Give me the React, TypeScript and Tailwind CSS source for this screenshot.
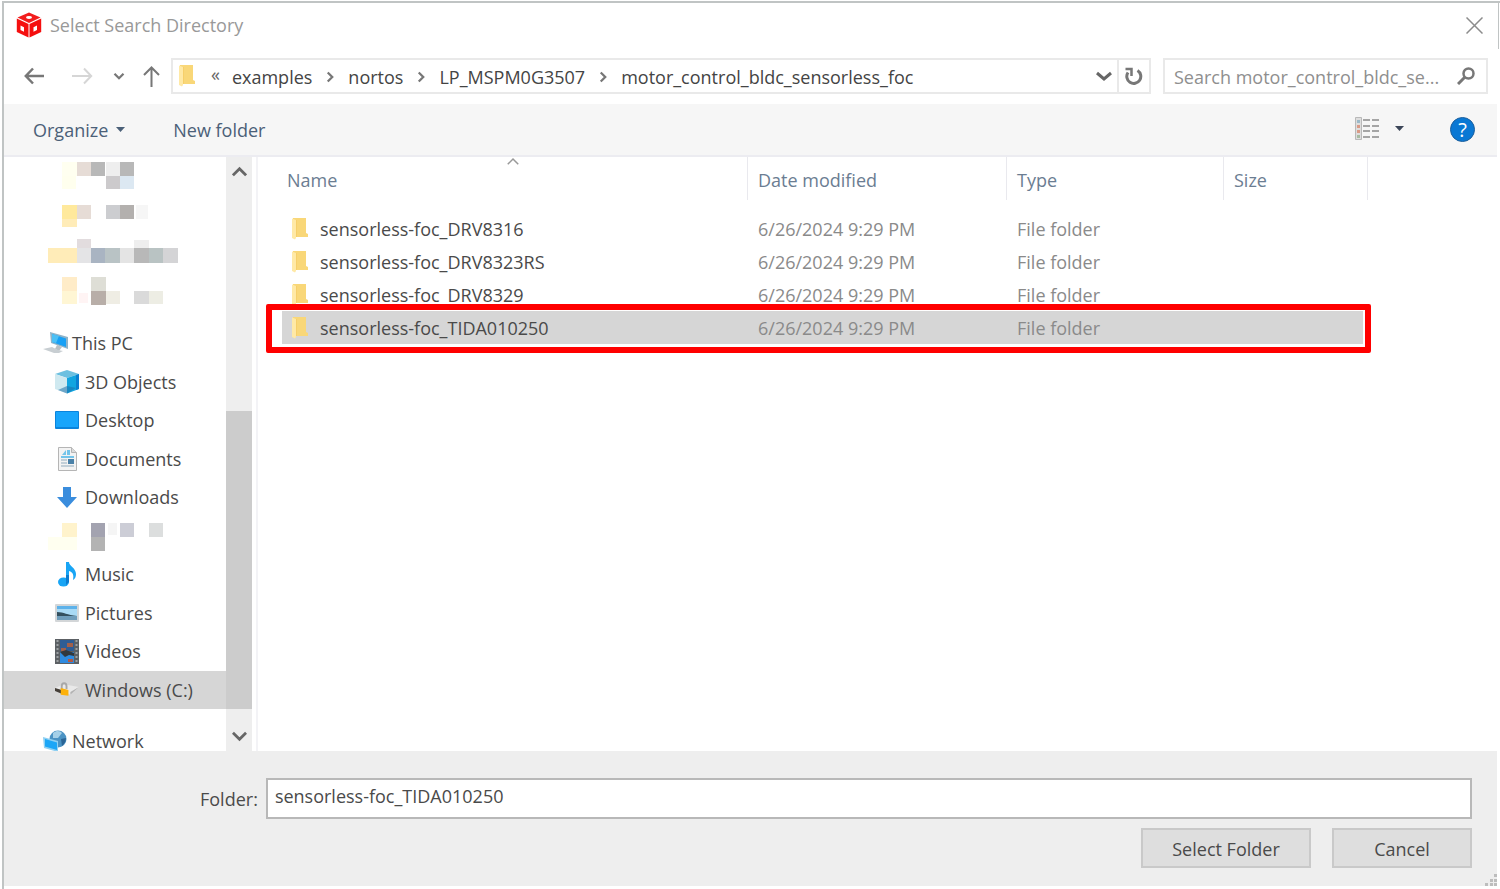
import type { ReactNode } from "react";

const files = [
	{ name: "sensorless-foc_DRV8316", date: "6/26/2024 9:29 PM", type: "File folder" },
	{ name: "sensorless-foc_DRV8323RS", date: "6/26/2024 9:29 PM", type: "File folder" },
	{ name: "sensorless-foc_DRV8329", date: "6/26/2024 9:29 PM", type: "File folder" },
	{ name: "sensorless-foc_TIDA010250", date: "6/26/2024 9:29 PM", type: "File folder", selected: true },
];

const crumbs = ["examples", "nortos", "LP_MSPM0G3507", "motor_control_bldc_sensorless_foc"];

// x, y, width, height, fill
type Block = [number, number, number, number, string];

const pinnedBlocks: Block[] = [
	[62, 5, 15, 14, "#fffff0"],
	[77, 5, 14, 14, "#e6dcd6"],
	[91, 5, 14, 14, "#b8b8b8"],
	[106, 5, 14, 14, "#eeeeee"],
	[120, 5, 14, 14, "#b8b8b8"],
	[62, 19, 14, 13, "#ffffee"],
	[106, 19, 14, 13, "#cccacc"],
	[120, 19, 14, 13, "#dce8f2"],
	[62, 48, 15, 14, "#ffe99c"],
	[77, 48, 14, 14, "#e6dcd6"],
	[106, 48, 14, 14, "#cccdd0"],
	[120, 48, 14, 14, "#b3b0ae"],
	[136, 48, 12, 14, "#f6f6f6"],
	[62, 62, 15, 8, "#ffecb8"],
	[77, 82, 14, 9, "#e2dcde"],
	[134, 83, 15, 8, "#eeeeee"],
	[48, 91, 29, 15, "#ffecb8"],
	[77, 91, 14, 15, "#e4e4e6"],
	[91, 91, 14, 15, "#a9b4c2"],
	[105, 91, 15, 15, "#b9c3c5"],
	[120, 91, 14, 15, "#e4e4e4"],
	[134, 91, 15, 15, "#b8b8b8"],
	[149, 91, 14, 15, "#b9c3c3"],
	[163, 91, 15, 15, "#d4d4d6"],
	[62, 120, 15, 14, "#ffecc8"],
	[91, 120, 15, 14, "#deded6"],
	[62, 134, 15, 13, "#fff6d4"],
	[79, 136, 9, 10, "#fff4f4"],
	[91, 134, 15, 14, "#b8aea8"],
	[106, 134, 14, 13, "#efede4"],
	[134, 134, 15, 13, "#dadada"],
	[149, 134, 14, 13, "#edede4"],
];

const hiddenBlocks: Block[] = [
	[62, 6, 15, 14, "#fff3cc"],
	[91, 6, 14, 14, "#a3a3b0"],
	[108, 6, 9, 12, "#f5f5f5"],
	[120, 6, 14, 14, "#cccdd6"],
	[149, 6, 14, 14, "#dcdede"],
	[48, 20, 29, 13, "#fffff0"],
	[91, 20, 14, 14, "#b3b3b3"],
];

function Mosaic({ blocks, className }: { blocks: Block[]; className: string }) {
	return (
		<svg className={className} aria-hidden="true">
			{blocks.map(([x, y, w, h, fill]) => (
				<rect key={`${x}-${y}`} x={x - 4} y={y} width={w} height={h} fill={fill} />
			))}
		</svg>
	);
}

type ChevronProps = { d: string; className: string; width?: number };

function Chevron({ d, className, width = 3 }: ChevronProps) {
	return (
		<svg className={className} viewBox="0 0 16 16" fill="none" stroke="currentColor" strokeWidth={width} aria-hidden="true">
			<path d={d} />
		</svg>
	);
}

function FolderIcon() {
	return (
		<svg className="shrink-0" width="16" height="23" viewBox="0 0 16 23" aria-hidden="true">
			<path d="M1 1h13v15l2 1v3H1z" fill="#f9d778" />
			<path d="M0 1.500 4 3v18l-1 1.500L0 21z" fill="#ffe9a6" />
			<path d="M4 3h1v17H4z" fill="#f6cf6a" />
		</svg>
	);
}

function CubeLogo() {
	return (
		<svg width="26" height="26" viewBox="0 0 26 26" aria-hidden="true">
			<path d="M13 .5 24.500 5.500 13 11 1.500 5.500z" fill="#f21d1d" />
			<path d="M.8 6.500l11.700 5.500v13.500L.8 20z" fill="#f50f0f" />
			<path d="M25.200 6.500l-11.700 5.500v13.500L25.200 20z" fill="#f50f0f" />
			<ellipse cx="13" cy="5.500" rx="3" ry="1.400" fill="#fff" />
			<path d="M4.500 13.500l3.500 1.700v4.500l-3.500-1.700z" fill="#fff" />
			<path d="M21 13.500l-3.500 1.700v4.500l3.500-1.700z" fill="#fff" />
		</svg>
	);
}

function PcIcon() {
	return (
		<svg width="26" height="24" viewBox="0 0 26 24" aria-hidden="true">
			<path d="M7 1l18 5v12L8 12z" fill="#8fb3c9" />
			<path d="M9 3l14 4.500v8.500L9 11z" fill="#18a0f5" />
			<path d="M9 3l7 2-3 7-4-1z" fill="#4cc0f5" />
			<path d="M14 14l5 2-3 4-4-2z" fill="#b9c0c4" />
			<path d="M0 18l9-2 6 3 5 1-4 2-5 0z" fill="#c8ced2" />
		</svg>
	);
}

function CubeIcon() {
	return (
		<svg width="24" height="24" viewBox="0 0 24 24" aria-hidden="true">
			<path d="M12 0 24 4 12 8 0 4z" fill="#6cc0e0" />
			<path d="M0 4l12 4v15.500L0 19z" fill="#cfe9f0" />
			<path d="M24 4 12 8v15.500L24 19z" fill="#12a5e0" />
			<path d="M21 5l3-1v15l-3 1z" fill="#0a7fd0" />
			<path d="M12 16l9 2-9 5.500L3 20z" fill="#1d6fa8" opacity=".55" />
		</svg>
	);
}

function DesktopIcon() {
	return (
		<svg width="24" height="18" viewBox="0 0 24 18" aria-hidden="true">
			<rect width="24" height="18" rx="1" fill="#0b84dc" />
			<rect x="1" y="1" width="22" height="15" fill="#18a5fb" />
		</svg>
	);
}

function DocumentIcon() {
	return (
		<svg width="19" height="24" viewBox="0 0 19 24" aria-hidden="true">
			<path d="M.5.500h13l5 5v18H.500z" fill="#f3f3f3" stroke="#b5b5b5" />
			<path d="M13.500.500v5h5" fill="#dcdcdc" stroke="#b5b5b5" />
			<path d="M4 8 8 3v5zM9 3h3v5H9zM3 9h13v2H3z" fill="#74c4ea" />
			<path d="M3 13h6M3 16h6M3 19h13" stroke="#b3c4d0" strokeWidth="1.500" />
			<rect x="10" y="12" width="6" height="5" fill="#4a81a8" />
		</svg>
	);
}

function DownloadIcon() {
	return (
		<svg width="20" height="21" viewBox="0 0 20 21" aria-hidden="true">
			<path d="M6 0h8v10h6L10 21 0 10h6z" fill="#3a8ddd" />
		</svg>
	);
}

function MusicIcon() {
	return (
		<svg width="18" height="25" viewBox="0 0 18 25" aria-hidden="true">
			<ellipse cx="5.500" cy="20" rx="5.500" ry="4.500" fill="#18a5f5" />
			<path d="M8 0h3c0 4 7 6 7 12 0 3-1 5-3 6 1-5 0-8-4-9v11H8z" fill="#18a5f5" />
			<path d="M8 13h3v7l-3 3z" fill="#0b7cd0" />
		</svg>
	);
}

function PictureIcon() {
	return (
		<svg width="24" height="18" viewBox="0 0 24 18" aria-hidden="true">
			<rect width="24" height="18" rx="1" fill="#d3d6d8" />
			<rect x="2" y="2" width="20" height="14" fill="#a9daf5" />
			<path d="M2 2h20v3H2z" fill="#5db2ea" />
			<path d="M2 8c7 0 10 3 20 4H2z" fill="#33505f" />
			<path d="M2 12h20v4H2z" fill="#6f9dbb" />
		</svg>
	);
}

function VideoIcon() {
	return (
		<svg width="24" height="25" viewBox="0 0 24 25" aria-hidden="true">
			<rect width="24" height="25" fill="#5c6064" />
			<path d="M2.500 1v24M21.500 1v24" stroke="#9da1a4" strokeWidth="2" strokeDasharray="2 2" />
			<rect x="5" y="1" width="14" height="11" fill="#2f5d95" />
			<rect x="5" y="13" width="14" height="11" fill="#2f8be0" />
			<path d="M12 4h6v4h-6zM6 9h5v3H6z" fill="#a2604a" />
			<path d="M5 13l6-2 8 3v3l-5-1-4 2z" fill="#31383f" />
			<path d="M13 20h5v3h-5z" fill="#b35a45" />
		</svg>
	);
}

function DriveIcon() {
	return (
		<svg width="25" height="15" viewBox="0 0 25 15" aria-hidden="true">
			<path d="M0 6l9-4 16 3-9 8z" fill="#e9e9e9" />
			<path d="M25 5l-9 8v-3z" fill="#b2b2b2" />
			<path d="M0 6l7 2v4L0 9z" fill="#453f38" />
			<path d="M7 7V4c0-4 5-4 5 0v3" fill="none" stroke="#a8a8a8" strokeWidth="2" />
			<path d="M6 6l8 2v6l-8-1z" fill="#fdb10a" />
		</svg>
	);
}

function NetworkIcon() {
	return (
		<svg width="24" height="22" viewBox="0 0 24 22" aria-hidden="true">
			<circle cx="15" cy="9" r="8.500" fill="#4b93c4" />
			<path d="M10 3c4-3 7-2 9 0l-4 5-5 0z" fill="#a5d0e8" />
			<path d="M18 9l5-1c0 4-2 6-4 8z" fill="#2b6596" />
			<path d="M0 7l15 4v11L1 18z" fill="#8fd0f2" />
			<path d="M2 9l12 3.500V20L2 16.500z" fill="#1ba6f7" />
		</svg>
	);
}

const places: { label: string; icon: ReactNode; nested?: boolean; selected?: boolean }[] = [
	{ label: "This PC", icon: <PcIcon />, nested: false },
	{ label: "3D Objects", icon: <CubeIcon /> },
	{ label: "Desktop", icon: <DesktopIcon /> },
	{ label: "Documents", icon: <DocumentIcon /> },
	{ label: "Downloads", icon: <DownloadIcon /> },
	{ label: "", icon: null },
	{ label: "Music", icon: <MusicIcon /> },
	{ label: "Pictures", icon: <PictureIcon /> },
	{ label: "Videos", icon: <VideoIcon /> },
	{ label: "Windows (C:)", icon: <DriveIcon />, selected: true },
];

function TitleBar() {
	return (
		<header className="mr-px flex h-[46px] items-center gap-2 border-r border-[#c0c4c4] pb-[2px] pl-3 pr-[15px]">
			<CubeLogo />
			<h1 className="flex-1 text-[#999999]">Select Search Directory</h1>
			<button type="button" aria-label="Close" className="text-[#8c8c8c]">
				<svg width="17" height="17" viewBox="0 0 17 17" stroke="currentColor" strokeWidth="1.500" aria-hidden="true">
					<path d="M.5.500l16 16M16.500.500l-16 16" />
				</svg>
			</button>
		</header>
	);
}

function NavBar() {
	return (
		<nav className="flex items-center pb-[10px] pl-5 pr-3 pt-[9px]">
			<button type="button" aria-label="Back" className="text-[#777777]">
				<svg width="20" height="18" viewBox="0 0 20 18" fill="none" stroke="currentColor" strokeWidth="2.500" aria-hidden="true">
					<path d="M9 1.500 1.800 9 9 16.500M2 9h18" />
				</svg>
			</button>
			<button type="button" aria-label="Forward" className="ml-7 text-[#d6d6d6]">
				<svg width="21" height="18" viewBox="0 0 21 18" fill="none" stroke="currentColor" strokeWidth="2" aria-hidden="true">
					<path d="M12 1.500 19.200 9 12 16.500M19 9H0" />
				</svg>
			</button>
			<button type="button" aria-label="Recent locations" className="ml-5 text-[#777777]">
				<Chevron className="size-3" d="M2 5l6 6 6-6" />
			</button>
			<button type="button" aria-label="Up" className="ml-[18px] text-[#777777]">
				<svg width="17" height="21" viewBox="0 0 17 21" fill="none" stroke="currentColor" strokeWidth="2" aria-hidden="true">
					<path d="M1 9l7.500-7.500L16 9M8.500 2v19" />
				</svg>
			</button>
			<div className="ml-[11px] flex h-9 min-w-0 flex-1 items-center border-2 border-[#e9e9e9] text-[#444444]">
				<div className="ml-[6px] pb-[2px]">
					<FolderIcon />
				</div>
				<span className="ml-4 pb-1 text-[#666666]">«</span>
				<ol className="ml-3 flex flex-1 items-center gap-3 pt-[2px]">
					{crumbs.map((crumb, i) => (
						<li key={crumb} className="flex items-center gap-3 whitespace-nowrap">
							{i > 0 && <Chevron className="size-3 text-[#777777]" d="M5 2l6 6-6 6" />}
							<a href="#">{crumb}</a>
						</li>
					))}
				</ol>
				<button type="button" aria-label="Previous locations" className="px-[5px] text-[#666666]">
					<Chevron className="size-4" d="M1 5l7 6 7-6" />
				</button>
				<button type="button" aria-label="Refresh" className="flex h-full w-8 items-center justify-center border-l-2 border-[#e9e9e9] text-[#777777]">
					<svg width="18" height="19" viewBox="0 0 18 19" fill="none" stroke="currentColor" strokeWidth="3" aria-hidden="true">
						<path d="M12.500 3.500A7 7 0 1 1 3 5.500" />
						<path d="M.500 2h6v7" strokeWidth="2.500" />
					</svg>
				</button>
			</div>
			<label className="ml-3 flex h-9 w-[325px] items-center border-2 border-[#e9e9e9] pl-[9px] pr-[11px] text-[#777777]">
				<input
					type="search"
					aria-label="Search"
					placeholder="Search motor_control_bldc_se..."
					className="min-w-0 flex-1 pt-[2px] outline-none placeholder:text-[#8f8f8f]"
				/>
				<svg width="18" height="18" viewBox="0 0 18 18" fill="none" stroke="currentColor" strokeWidth="2.500" aria-hidden="true">
					<circle cx="11.500" cy="6.500" r="5" />
					<path d="M8 10l-7 7" strokeWidth="3" />
				</svg>
			</label>
		</nav>
	);
}

function Toolbar() {
	return (
		<div className="mr-[3px] flex h-[53px] items-center border-b-2 border-[#ececf1] bg-[#f6f6f6] pl-[29px] pr-[22px] text-[#4b6078]">
			<button type="button" className="flex items-center gap-2">
				Organize
				<svg width="9" height="5" viewBox="0 0 9 5" fill="currentColor" aria-hidden="true">
					<path d="M0 0h9L4.500 5z" />
				</svg>
			</button>
			<button type="button" className="ml-12">New folder</button>
			<div className="flex-1" />
			<button type="button" aria-label="Change your view" className="flex items-center gap-4 pb-[2px] text-[#3c4658]">
				<svg width="24" height="23" viewBox="0 0 24 23" aria-hidden="true">
					<path d="M.500.500h6v22h-6z" fill="#dedede" stroke="#b9b9b9" />
					<path d="M2 3h3v3H2z" fill="#9cb9c8" />
					<path d="M2 8h3v3H2zM2 13h3v3H2z" fill="#d99a86" />
					<path d="M2 18h3v3H2z" fill="#a8bba2" />
					<path d="M8 3h7M17 3h7M8 9h7M17 9h7M8 14h7M17 14h7M8 20h7M17 20h7" stroke="#a5a5a5" strokeWidth="2" />
				</svg>
				<svg width="9" height="5" viewBox="0 0 9 5" fill="currentColor" aria-hidden="true">
					<path d="M0 0h9L4.500 5z" />
				</svg>
			</button>
			<button
				type="button"
				aria-label="Help"
				className="ml-[46px] flex size-[25px] items-center justify-center rounded-full border border-[#1c5f9c] bg-[#0a78d4] text-xl leading-none text-white"
			>
				?
			</button>
		</div>
	);
}

function Sidebar() {
	return (
		<aside className="flex w-[248px] shrink-0">
			<div className="flex flex-1 flex-col overflow-hidden">
				<Mosaic blocks={pinnedBlocks} className="h-[167px] w-full shrink-0" />
				<ul className="grid h-[385px] shrink-0 auto-rows-fr">
					{places.map((place) =>
						place.label ? (
							<li key={place.label}>
								<a
									href="#"
									className={`flex h-full items-center whitespace-nowrap text-[#4a4a4a] ${place.nested === false ? "gap-[3px] pl-[39px]" : "gap-[6px] pl-[51px]"} ${place.selected ? "bg-[#d6d6d6]" : ""}`}
								>
									<span className={`flex justify-center ${place.nested === false ? "w-[26px]" : "w-6"}`}>{place.icon}</span>
									{place.label}
								</a>
							</li>
						) : (
							<li key="hidden">
								<Mosaic blocks={hiddenBlocks} className="h-full w-full" />
							</li>
						),
					)}
				</ul>
				<a href="#" className="mt-3 flex h-[39px] shrink-0 items-center gap-[5px] pl-[39px] text-[#4a4a4a]">
					<NetworkIcon />
					Network
				</a>
			</div>
			<div className="flex w-[26px] shrink-0 flex-col items-center bg-[#eeeeee] text-[#666666]">
				<Chevron className="my-2 size-[15px]" d="M1 11l7-7 7 7" />
				<div className="flex-[223]" />
				<div className="w-full flex-[299] bg-[#cccccc]" />
				<Chevron className="mb-[7px] mt-5 size-[15px]" d="M1 4l7 7 7-7" />
			</div>
		</aside>
	);
}

function FileTable() {
	return (
		<main className="ml-1 min-w-0 flex-1 border-l-2 border-[#f3f3f6] pl-6 pr-[132px]">
			<table className="w-full table-fixed text-left text-[#8a8a8a]">
				<thead className="text-[#6b7d92]">
					<tr>
						<th className="pb-3 font-normal" aria-sort="ascending">
							<div className="relative flex h-[43px] items-center border-r border-[#e9e9ee] pl-[5px] pt-[2px]">
								Name
								<Chevron className="absolute -top-px left-1/2 -ml-2 size-3 text-[#999999]" d="M1 11l7-7 7 7" width={2} />
							</div>
						</th>
						<th className="w-[259px] pb-3 font-normal">
							<div className="flex h-[43px] items-center border-r border-[#e9e9ee] pl-[10px] pt-[2px]">Date modified</div>
						</th>
						<th className="w-[217px] pb-3 font-normal">
							<div className="flex h-[43px] items-center border-r border-[#e9e9ee] pl-[10px] pt-[2px]">Type</div>
						</th>
						<th className="w-36 pb-3 font-normal">
							<div className="flex h-[43px] items-center border-r border-[#e9e9ee] pl-[10px] pt-[2px]">Size</div>
						</th>
					</tr>
				</thead>
				<tbody>
					{files.map((file) => (
						<tr key={file.name} className={file.selected ? "relative h-[33px] bg-[#d6d6d6]" : "h-[33px]"}>
							<td className="p-0">
								<a href="#" className="flex items-center gap-3 pl-[10px] text-[#4a4a4a]">
									<FolderIcon />
									{file.name}
								</a>
								{file.selected && (
									<span className="absolute -bottom-[9px] -left-4 -right-[3px] -top-[7px] rounded-xs border-6 border-[#ff0000] shadow-[inset_-2px_-2px_0_#ffffff]" />
								)}
							</td>
							<td className="py-0 pl-[10px]">{file.date}</td>
							<td className="py-0 pl-[10px]">{file.type}</td>
							<td />
						</tr>
					))}
				</tbody>
			</table>
		</main>
	);
}

function Footer() {
	return (
		<footer className="relative mb-[3px] mr-[3px] bg-[#eeeeee] pb-[18px] pl-[196px] pr-[25px] pt-[27px] text-[#4a4a4a]">
			<div className="flex items-center gap-2">
				<label htmlFor="folder">Folder:</label>
				<input
					id="folder"
					type="text"
					defaultValue="sensorless-foc_TIDA010250"
					className="h-[41px] min-w-0 flex-1 border-2 border-[#b8b8b8] bg-white px-[7px] pb-[6px] outline-none"
				/>
			</div>
			<div className="mt-[9px] flex justify-end gap-[21px]">
				<button type="button" className="h-10 w-[170px] border-2 border-[#c9c9c9] bg-[#dedede] pt-[2px]">Select Folder</button>
				<button type="button" className="h-10 w-[140px] border-2 border-[#c9c9c9] bg-[#dedede] pt-[2px]">Cancel</button>
			</div>
			<svg className="absolute bottom-0 right-0" width="12" height="12" viewBox="0 0 12 12" fill="#bdbdbd" aria-hidden="true">
				<path d="M9 0h3v3H9zM9 5h3v3H9zM5 5h3v3H5zM9 9h3v3H9zM5 9h3v3H5zM0 9h3v3H0z" />
			</svg>
		</footer>
	);
}

export default function App() {
	return (
		<div className="h-screen bg-white pl-[2px] pt-[1px] font-['Open_Sans','Noto_Sans',sans-serif] text-[18px] leading-6">
			<div className="flex h-full flex-col border-l-2 border-t-2 border-[#c0c4c4]">
				<TitleBar />
				<NavBar />
				<Toolbar />
				<div className="flex min-h-0 flex-1">
					<Sidebar />
					<FileTable />
				</div>
				<Footer />
			</div>
		</div>
	);
}
